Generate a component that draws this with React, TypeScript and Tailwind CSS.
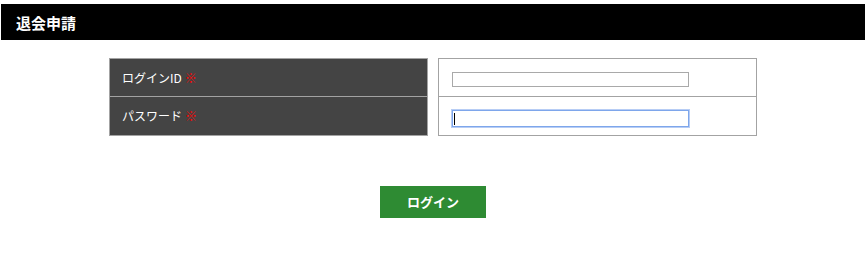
import React from "react";

export default function App() {
  const font = { fontFamily: '"Noto Sans CJK JP", "Noto Sans", sans-serif' };
  return (
    <div className="w-[868px] h-[263px] bg-white pt-[4px]" style={font}>
      <div className="ml-[1px] w-[864px] h-[36px] bg-black flex items-center pl-[15px]">
        <span className="text-white font-bold text-[15px] leading-none">退会申請</span>
      </div>
      <div className="mt-[18px] flex justify-center gap-[10px] pr-[2px]">
        <div className="w-[319px] border border-[#a3a3a3] bg-[#444444]">
          <div className="h-[38px] border-b border-[#a3a3a3] flex items-center pl-[12px] text-white text-[12px]">
            ログインID<span className="text-[#ff0000] ml-[3px]">※</span>
          </div>
          <div className="h-[38px] flex items-center pl-[12px] text-white text-[12px]">
            パスワード<span className="text-[#ff0000] ml-[3px]">※</span>
          </div>
        </div>
        <div className="w-[319px] border border-[#a3a3a3] bg-white">
          <div className="h-[38px] border-b border-[#a3a3a3] pl-[13px] pt-[13px]">
            <div className="w-[237px] h-[15px] border border-[#a9a9a9] bg-white"></div>
          </div>
          <div className="h-[38px] pl-[13px] pt-[13px]">
            <div className="w-[237px] h-[17px] border border-[#7ea6eb] outline outline-1 outline-[#b7cdf5] bg-white flex items-center pl-[1px]">
              <div className="w-[1px] h-[12px] bg-black"></div>
            </div>
          </div>
        </div>
      </div>
      <div className="mt-[50px] flex justify-center pr-[2px]">
        <div className="w-[106px] h-[32px] bg-[#2e8b33] flex items-center justify-center text-white font-bold text-[13px]">
          ログイン
        </div>
      </div>
    </div>
  );
}
